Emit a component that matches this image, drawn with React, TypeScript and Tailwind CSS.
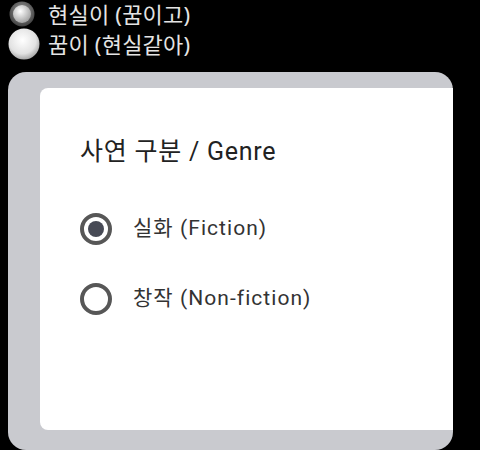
function OldRadio({ checked }: { checked: boolean }) {
  if (checked) {
    return (
      <svg width="26" height="26" viewBox="0 0 26 26" className="shrink-0">
        <defs>
          <radialGradient id="ringA" cx="50%" cy="40%" r="60%">
            <stop offset="0%" stopColor="#a0a0a0" />
            <stop offset="100%" stopColor="#404040" />
          </radialGradient>
          <radialGradient id="coreA" cx="40%" cy="35%" r="65%">
            <stop offset="0%" stopColor="#ffffff" />
            <stop offset="100%" stopColor="#a4a4a4" />
          </radialGradient>
        </defs>
        <circle cx="13" cy="13" r="12.5" fill="url(#ringA)" />
        <circle cx="13" cy="13" r="9" fill="url(#coreA)" />
      </svg>
    );
  }
  return (
    <svg width="32" height="32" viewBox="0 0 32 32" className="shrink-0">
      <defs>
        <radialGradient id="coreB" cx="45%" cy="38%" r="62%">
          <stop offset="0%" stopColor="#ffffff" />
          <stop offset="70%" stopColor="#e2e2e2" />
          <stop offset="100%" stopColor="#a9a9a9" />
        </radialGradient>
      </defs>
      <circle cx="16" cy="16" r="15.5" fill="url(#coreB)" />
    </svg>
  );
}

function MaterialRadio({ checked }: { checked: boolean }) {
  return (
    <span className="flex h-[32px] w-[32px] shrink-0 items-center justify-center rounded-full border-[4px] border-[#575757]">
      {checked && <span className="h-[16px] w-[16px] rounded-full bg-[#474a55]" />}
    </span>
  );
}

const cjk = "font-['Roboto','Noto_Sans_CJK_KR',sans-serif]";

export default function App() {
  return (
    <div className="h-[450px] w-[480px] overflow-hidden bg-black">
      <div className="flex flex-col font-['Noto_Sans','Noto_Sans_CJK_KR',sans-serif] text-[22px] leading-none tracking-[0.01em] text-[#e4e4e4]">
        <div className="flex h-[27px] items-center">
          <span className="ml-[9px] mr-[13px] pt-[1px]">
            <OldRadio checked />
          </span>
          <span>현실이 (꿈이고)</span>
        </div>
        <div className="flex h-[33px] items-center">
          <span className="ml-[8px] mr-[8px] pt-[1px]">
            <OldRadio checked={false} />
          </span>
          <span>꿈이 (현실같아)</span>
        </div>
      </div>

      <div className="ml-[8px] mt-[12px] w-[445px] rounded-[18px] bg-[#c9cacf] pb-[20px] pl-[32px] pt-[16px]">
        <div className={`h-[342px] rounded-l-[8px] bg-white pl-[40px] pt-[48px] ${cjk} text-[#222222]`}>
          <h2 className="text-[25px] leading-[32px] tracking-[0.03em]">사연 구분 / Genre</h2>
          <div className="mt-[45px] flex flex-col gap-[38px]">
            <label className="flex h-[32px] items-center gap-[21px]">
              <MaterialRadio checked />
              <span className="text-[21px] tracking-[0.05em] text-[#333333]">실화 (Fiction)</span>
            </label>
            <label className="flex h-[32px] items-center gap-[21px]">
              <MaterialRadio checked={false} />
              <span className="text-[21px] tracking-[0.05em] text-[#333333]">창작 (Non-fiction)</span>
            </label>
          </div>
        </div>
      </div>
    </div>
  );
}
